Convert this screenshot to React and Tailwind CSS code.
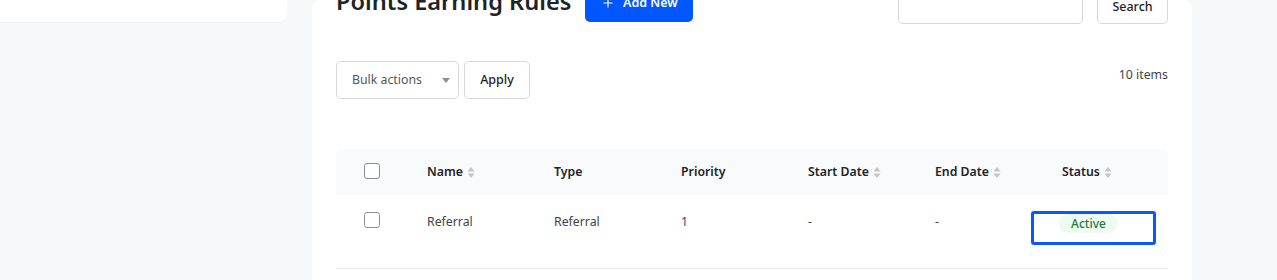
import { Plus } from 'lucide-react'

const COLS = [
  { label: 'Name', sort: true },
  { label: 'Type', sort: false },
  { label: 'Priority', sort: false },
  { label: 'Start Date', sort: true },
  { label: 'End Date', sort: true },
]

function SortIcon() {
  return (
    <svg width="8" height="13" viewBox="0 0 8 13" className="ml-[4px] inline-block">
      <path d="M4 1 L7.5 5.5 H0.5 Z" fill="#c4c4c4" />
      <path d="M4 12 L7.5 7.5 H0.5 Z" fill="#c4c4c4" />
    </svg>
  )
}

function Checkbox() {
  return <span className="block w-[16px] h-[16px] rounded-[3px] border border-[#8c8f94] bg-white" />
}

export default function App() {
  return (
    <div className="flex h-[280px] overflow-hidden bg-[#f7f8fa] font-['Noto_Sans',sans-serif] text-[#1d2327]">
      {/* Sidebar */}
      <div className="w-[287px] shrink-0">
        <div className="h-[22px] bg-white rounded-br-[8px] shadow-[0_1px_1px_rgba(0,0,0,0.03)]" />
      </div>

      {/* Main card */}
      <div className="ml-[25px] w-[880px] shrink-0 bg-white rounded-t-[8px] px-[24px]">
        {/* Header */}
        <div className="flex items-start justify-between -mt-[15px] h-[40px]">
          <div className="flex items-start gap-[14px]">
            <h1 className="text-[23.6px] leading-[32px] font-semibold text-[#1d2327]">Points Earning Rules</h1>
            <button className="-mt-[1px] h-[38px] w-[108px] rounded-[5px] bg-[#0057ff] text-white text-[12.5px] font-semibold flex items-center justify-center gap-[8px]">
              <Plus size={14} strokeWidth={2} />
              Add New
            </button>
          </div>
          <div className="flex items-start gap-[14px] mt-[1px]">
            <div className="w-[185px] h-[38px] rounded-[5px] border border-[#d5d7da] bg-white" />
            <button className="w-[71px] h-[38px] rounded-[5px] border border-[#d5d7da] bg-white text-[12.5px] font-medium flex items-end justify-center pb-[6px]">Search</button>
          </div>
        </div>

        {/* Bulk row */}
        <div className="mt-[36px] flex items-start justify-between">
          <div className="flex gap-[5px]">
            <div className="w-[123px] h-[38px] rounded-[5px] border border-[#d5d7da] flex items-center justify-between pl-[15px] pr-[8px] pt-[1px] text-[12.3px] text-[#50575e]">
              <span>Bulk actions</span>
              <svg width="8" height="5" viewBox="0 0 8 5"><path d="M0 0 H8 L4 5 Z" fill="#8c8f94" /></svg>
            </div>
            <button className="w-[66px] h-[38px] rounded-[5px] border border-[#d5d7da] pt-[1px] text-[12.5px] font-medium text-[#1d2327]">Apply</button>
          </div>
          <span className="mt-[5px] text-[12.3px] text-[#3c434a]">10 items</span>
        </div>

        {/* Table */}
        <div className="mt-[50px]">
          <div className="flex h-[46px] items-center pt-[1px] bg-[#f9fafb] rounded-t-[6px] text-[12.3px] font-semibold text-[#1d2327]">
            <div className="w-[91px] shrink-0 pl-[28px]"><span className="block -mt-[4px]"><Checkbox /></span></div>
            {COLS.map(c => (
              <div key={c.label} className="w-[127px] shrink-0 flex items-center">
                {c.label}
                {c.sort && <SortIcon />}
              </div>
            ))}
            <div className="flex-1 flex items-center">
              Status
              <SortIcon />
            </div>
          </div>
          <div className="flex h-[74px] items-start pt-[17px] border-b border-[#ececec] text-[12.3px] text-[#3c434a]">
            <div className="w-[91px] shrink-0 pl-[28px]"><Checkbox /></div>
            <div className="w-[127px] shrink-0 pt-[1px]">Referral</div>
            <div className="w-[127px] shrink-0 pt-[1px]">Referral</div>
            <div className="w-[127px] shrink-0 pt-[1px]">1</div>
            <div className="w-[127px] shrink-0 pt-[1px]">-</div>
            <div className="w-[127px] shrink-0 pt-[1px]">-</div>
            <div className="flex-1 -ml-[31px] -mt-[1px]">
              <div className="w-[125px] h-[34px] border-[3px] border-[#0b57ff] rounded-[3px] flex justify-center">
                <span className="h-[19px] px-[12px] rounded-full bg-[#effaf1] text-[#227a3b] text-[12px] font-medium leading-[19px] -ml-[10px]">Active</span>
              </div>
            </div>
          </div>
        </div>
      </div>
    </div>
  )
}
